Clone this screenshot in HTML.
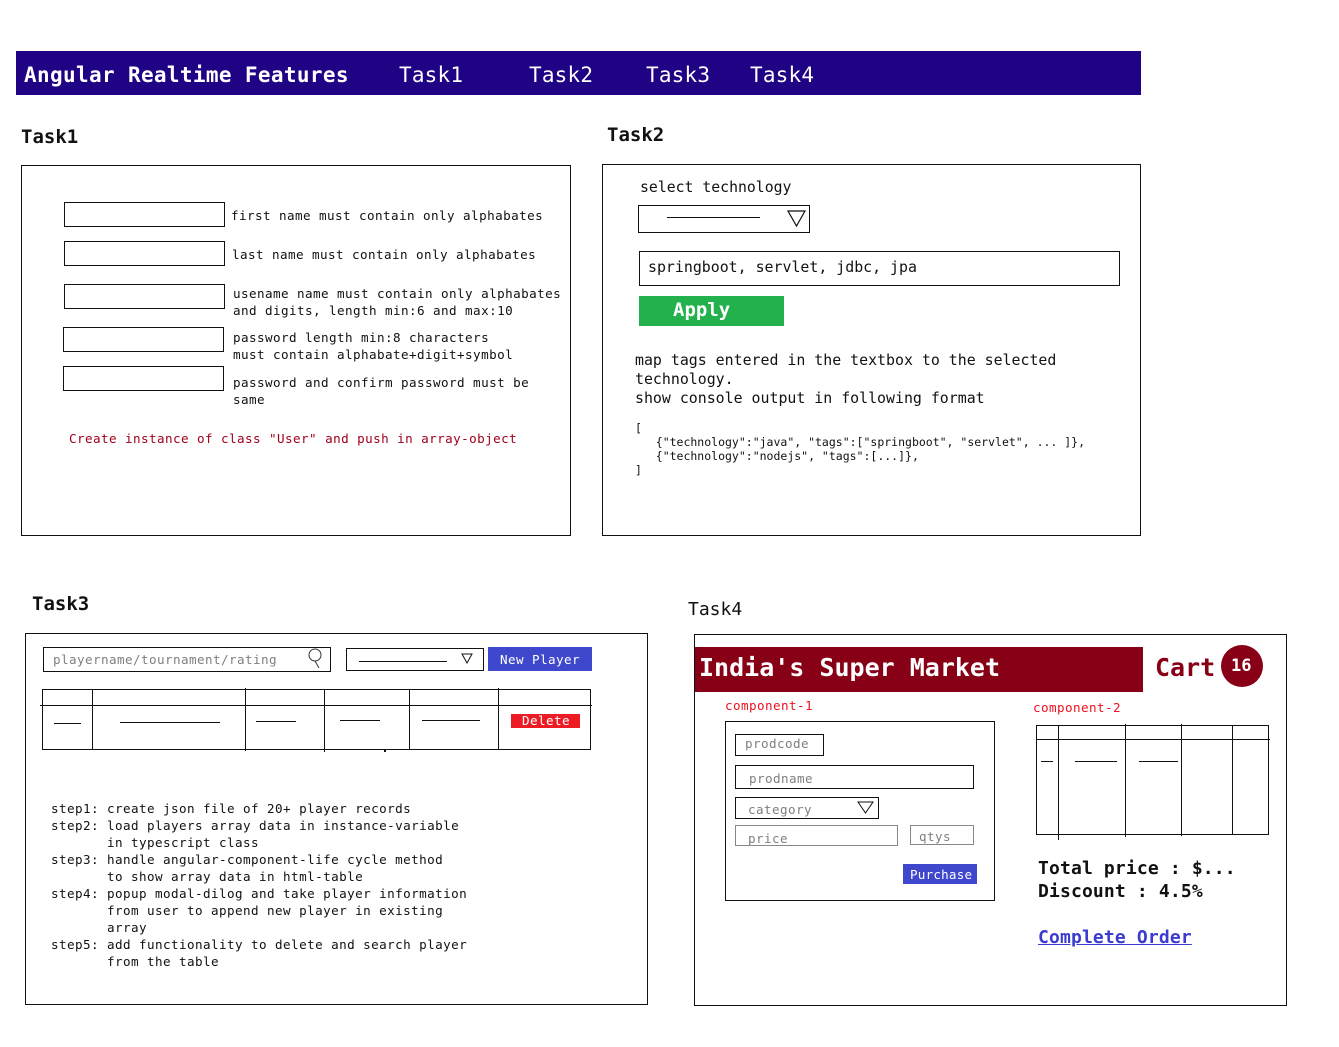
<!DOCTYPE html>
<html><head><meta charset="utf-8"><style>
body{margin:0;width:1339px;height:1047px;background:#fff;position:relative;overflow:hidden;font-family:"DejaVu Sans Mono","Liberation Mono",monospace;color:#111}
.a{position:absolute;white-space:pre;line-height:17px}
.b{position:absolute;border:1px solid #111;box-sizing:border-box}
.h{position:absolute;height:1px;background:#111}
.v{position:absolute;width:1px;background:#111}
.t13{font-size:12.6px;letter-spacing:0.42px}
.g{color:#7f7f7f}
</style></head><body>
<!-- header -->
<div style="position:absolute;left:16px;top:51px;width:1125px;height:44px;background:#1f0384"></div>
<div class="a" style="left:24px;top:63px;font-size:21px;line-height:24px;color:#fff;font-weight:bold;letter-spacing:0.35px">Angular Realtime Features</div>
<div class="a" style="left:399px;top:63px;font-size:21px;line-height:24px;color:#fff;letter-spacing:0.2px">Task1</div>
<div class="a" style="left:529px;top:63px;font-size:21px;line-height:24px;color:#fff;letter-spacing:0.2px">Task2</div>
<div class="a" style="left:646px;top:63px;font-size:21px;line-height:24px;color:#fff;letter-spacing:0.2px">Task3</div>
<div class="a" style="left:750px;top:63px;font-size:21px;line-height:24px;color:#fff;letter-spacing:0.2px">Task4</div>

<!-- Task1 -->
<div class="a" style="left:21px;top:126px;font-size:19px;line-height:22px;font-weight:bold">Task1</div>
<div class="b" style="left:21px;top:165px;width:550px;height:371px"></div>
<div class="b" style="left:64px;top:202px;width:161px;height:25px"></div>
<div class="b" style="left:64px;top:241px;width:161px;height:25px"></div>
<div class="b" style="left:64px;top:284px;width:161px;height:25px"></div>
<div class="b" style="left:63px;top:327px;width:161px;height:25px"></div>
<div class="b" style="left:63px;top:366px;width:161px;height:25px"></div>
<div class="a t13" style="left:231px;top:207px">first name must contain only alphabates</div>
<div class="a t13" style="left:232px;top:246px">last name must contain only alphabates</div>
<div class="a t13" style="left:233px;top:285px">usename name must contain only alphabates
and digits, length min:6 and max:10</div>
<div class="a t13" style="left:233px;top:329px">password length min:8 characters
must contain alphabate+digit+symbol</div>
<div class="a t13" style="left:233px;top:374px">password and confirm password must be
same</div>
<div class="a t13" style="left:69px;top:430px;color:#a0001a">Create instance of class "User" and push in array-object</div>

<!-- Task2 -->
<div class="a" style="left:607px;top:124px;font-size:19px;line-height:22px;font-weight:bold">Task2</div>
<div class="b" style="left:602px;top:164px;width:539px;height:372px"></div>
<div class="a" style="left:640px;top:178px;font-size:14.8px;line-height:19px">select technology</div>
<div class="b" style="left:638px;top:205px;width:172px;height:28px"></div>
<div class="h" style="left:667px;top:217px;width:93px"></div>
<svg style="position:absolute;left:787px;top:210px" width="20" height="18"><path d="M1 1 L18 1 L9.5 16 Z" fill="none" stroke="#111" stroke-width="1.2"/></svg>
<div class="b" style="left:639px;top:251px;width:481px;height:35px"></div>
<div class="a" style="left:648px;top:258px;font-size:14.9px;line-height:19px">springboot, servlet, jdbc, jpa</div>
<div style="position:absolute;left:639px;top:296px;width:145px;height:30px;background:#22b14c"></div>
<div class="a" style="left:673px;top:298px;font-size:19px;line-height:24px;color:#fff;font-weight:bold">Apply</div>
<div class="a" style="left:635px;top:351px;font-size:14.9px;line-height:19px">map tags entered in the textbox to the selected
technology.
show console output in following format</div>
<div class="a" style="left:635px;top:421px;font-size:11.5px;line-height:14px">[
   {"technology":"java", "tags":["springboot", "servlet", ... ]},
   {"technology":"nodejs", "tags":[...]},
]</div>

<!-- Task3 -->
<div class="a" style="left:32px;top:593px;font-size:19px;line-height:22px;font-weight:bold">Task3</div>
<div class="b" style="left:25px;top:633px;width:623px;height:372px"></div>
<div class="b" style="left:43px;top:647px;width:288px;height:25px"></div>
<div class="a t13 g" style="left:53px;top:651px">playername/tournament/rating</div>
<svg style="position:absolute;left:306px;top:647px" width="18" height="22"><circle cx="9" cy="8" r="6" fill="none" stroke="#333" stroke-width="1"/><path d="M9 14 L13 21" stroke="#333" stroke-width="1"/></svg>
<div class="b" style="left:346px;top:648px;width:138px;height:23px"></div>
<div class="h" style="left:359px;top:661px;width:88px"></div>
<svg style="position:absolute;left:461px;top:653px" width="13" height="12"><path d="M1 1 L11 1 L6 10 Z" fill="none" stroke="#111" stroke-width="1"/></svg>
<div style="position:absolute;left:488px;top:647px;width:104px;height:24px;background:#3f48cc"></div>
<div class="a t13" style="left:500px;top:651px;color:#fff">New Player</div>
<div class="b" style="left:42px;top:689px;width:549px;height:61px"></div>
<div class="h" style="left:40px;top:705px;width:552px"></div>
<div class="v" style="left:92px;top:689px;height:61px"></div>
<div class="v" style="left:245px;top:688px;height:63px"></div>
<div class="v" style="left:324px;top:689px;height:63px"></div>
<div class="v" style="left:409px;top:689px;height:61px"></div>
<div class="v" style="left:498px;top:688px;height:62px"></div>
<div class="h" style="left:54px;top:723px;width:27px"></div>
<div class="h" style="left:120px;top:722px;width:100px"></div>
<div class="h" style="left:256px;top:721px;width:40px"></div>
<div class="h" style="left:340px;top:720px;width:40px"></div>
<div class="h" style="left:422px;top:720px;width:58px"></div>
<div style="position:absolute;left:384px;top:750px;width:2px;height:2px;background:#111"></div>
<div style="position:absolute;left:511px;top:714px;width:69px;height:14px;background:#ed1c24"></div>
<div class="a t13" style="left:522px;top:712px;color:#fff">Delete</div>
<div class="a t13" style="left:51px;top:800px">step1: create json file of 20+ player records
step2: load players array data in instance-variable
       in typescript class
step3: handle angular-component-life cycle method
       to show array data in html-table
step4: popup modal-dilog and take player information
       from user to append new player in existing
       array
step5: add functionality to delete and search player
       from the table</div>

<!-- Task4 -->
<div class="a" style="left:688px;top:599px;font-size:18px;line-height:22px">Task4</div>
<div class="b" style="left:694px;top:634px;width:593px;height:372px"></div>
<div style="position:absolute;left:695px;top:647px;width:448px;height:45px;background:#880015"></div>
<div class="a" style="left:699px;top:653px;font-size:25px;line-height:30px;color:#fff;font-weight:bold">India's Super Market</div>
<div class="a" style="left:1155px;top:653px;font-size:25px;line-height:30px;color:#880015;font-weight:bold">Cart</div>
<div style="position:absolute;left:1221px;top:645px;width:42px;height:42px;border-radius:50%;background:#880015"></div>
<div class="a" style="left:1231px;top:656px;font-size:17px;line-height:20px;color:#fff;font-weight:bold">16</div>
<div class="a t13" style="left:725px;top:697px;color:#f01020">component-1</div>
<div class="a t13" style="left:1033px;top:699px;color:#f01020">component-2</div>
<div class="b" style="left:725px;top:721px;width:270px;height:180px"></div>
<div class="b" style="left:735px;top:734px;width:89px;height:22px"></div>
<div class="a t13 g" style="left:745px;top:735px">prodcode</div>
<div class="b" style="left:735px;top:765px;width:239px;height:24px"></div>
<div class="a t13 g" style="left:749px;top:770px">prodname</div>
<div class="b" style="left:735px;top:797px;width:144px;height:22px"></div>
<div class="a t13 g" style="left:748px;top:801px">category</div>
<svg style="position:absolute;left:857px;top:801px" width="18" height="14"><path d="M1 1 L16 1 L8.5 12 Z" fill="none" stroke="#111" stroke-width="1"/></svg>
<div class="b" style="left:735px;top:825px;width:163px;height:21px;border-color:#888"></div>
<div class="a t13 g" style="left:748px;top:830px">price</div>
<div class="b" style="left:910px;top:825px;width:64px;height:20px;border-color:#888"></div>
<div class="a t13 g" style="left:919px;top:828px">qtys</div>
<div style="position:absolute;left:903px;top:864px;width:74px;height:20px;background:#3f48cc"></div>
<div class="a t13" style="left:910px;top:866px;color:#fff;letter-spacing:0.2px">Purchase</div>
<div class="b" style="left:1036px;top:725px;width:233px;height:110px"></div>
<div class="h" style="left:1036px;top:739px;width:234px"></div>
<div class="v" style="left:1058px;top:725px;height:115px"></div>
<div class="v" style="left:1125px;top:724px;height:113px"></div>
<div class="v" style="left:1181px;top:724px;height:112px"></div>
<div class="v" style="left:1232px;top:725px;height:110px"></div>
<div class="h" style="left:1041px;top:761px;width:12px"></div>
<div class="h" style="left:1075px;top:761px;width:42px"></div>
<div class="h" style="left:1139px;top:761px;width:39px"></div>
<div class="a" style="left:1038px;top:857px;font-size:18px;line-height:23px;font-weight:bold;letter-spacing:0.15px">Total price : $...
Discount : 4.5%</div>
<div class="a" style="left:1038px;top:926px;font-size:18px;line-height:23px;font-weight:bold;color:#3b3bd0;text-decoration:underline;letter-spacing:0.15px">Complete Order</div>
</body></html>
